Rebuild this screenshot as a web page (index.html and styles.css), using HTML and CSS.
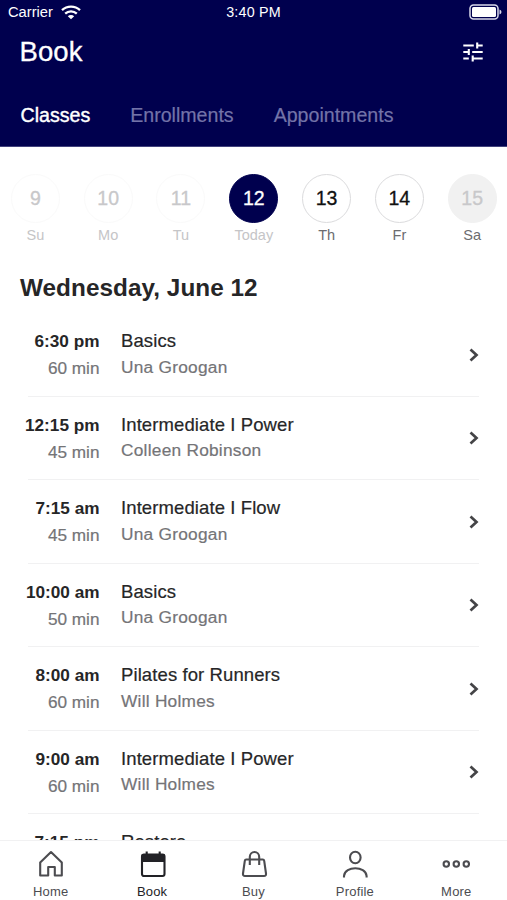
FILE: index.html
```html
<!DOCTYPE html>
<html lang="en">
<head>
<meta charset="utf-8">
<title>Book</title>
<link rel="stylesheet" href="styles.css">
</head>
<body>
<div class="app">
  <header class="header">
    <div class="status">
      <div class="carrier"><span>Carrier</span>
        <svg width="20" height="15" viewBox="0 0 20 15" fill="none" stroke="#fff" stroke-width="2.3"><path d="M1 5.2a13 13 0 0 1 18 0M4.2 8.6a8.4 8.4 0 0 1 11.6 0"/><path d="M10 14.2 6.8 11.2a4.6 4.6 0 0 1 6.4 0z" fill="#fff" stroke="none"/></svg>
      </div>
      <span class="clock">3:40 PM</span>
      <svg class="battery" width="33" height="16" viewBox="0 0 33 16"><rect x="1" y="1" width="28" height="14" rx="3.5" fill="none" stroke="#d9d9ea" stroke-width="1.5"/><rect x="3" y="3" width="24" height="10" rx="1.5" fill="#fff"/><path d="M30.5 5.5q2 .6 2 2.5t-2 2.500z" fill="#d9d9ea"/></svg>
    </div>
    <div class="title-row">
      <h1>Book</h1>
      <svg width="20" height="20" viewBox="0 0 20 20" fill="none" stroke="#fff" stroke-width="2.1"><path d="M.3 3.500h10.500M14.200 .5v6M14.200 3.500h5.500M.3 10h5.500M5.800 7v6M9.200 10h10.500M.3 16.500h5.500M9.700 13.500v6M9.700 16.500h10"/></svg>
    </div>
    <nav class="tabs"><span class="active">Classes</span><span>Enrollments</span><span>Appointments</span></nav>
  </header>
  <section class="week">
    <div class="day past"><b>9</b><span>Su</span></div>
    <div class="day past"><b>10</b><span>Mo</span></div>
    <div class="day past"><b>11</b><span>Tu</span></div>
    <div class="day today"><b>12</b><span>Today</span></div>
    <div class="day"><b>13</b><span>Th</span></div>
    <div class="day"><b>14</b><span>Fr</span></div>
    <div class="day closed"><b>15</b><span>Sa</span></div>
  </section>
  <h2>Wednesday, June 12</h2>
  <main class="list">
    <article class="row"><div class="when"><b>6:30 pm</b><span>60 min</span></div><div class="what"><h3>Basics</h3><p>Una Groogan</p></div><svg class="chev" viewBox="0 0 10 14"><path d="M1.500 1.500 7.500 7l-6 5.500"/></svg></article>
    <article class="row"><div class="when"><b>12:15 pm</b><span>45 min</span></div><div class="what"><h3>Intermediate I Power</h3><p>Colleen Robinson</p></div><svg class="chev" viewBox="0 0 10 14"><path d="M1.500 1.500 7.500 7l-6 5.500"/></svg></article>
    <article class="row"><div class="when"><b>7:15 am</b><span>45 min</span></div><div class="what"><h3>Intermediate I Flow</h3><p>Una Groogan</p></div><svg class="chev" viewBox="0 0 10 14"><path d="M1.500 1.500 7.500 7l-6 5.500"/></svg></article>
    <article class="row"><div class="when"><b>10:00 am</b><span>50 min</span></div><div class="what"><h3>Basics</h3><p>Una Groogan</p></div><svg class="chev" viewBox="0 0 10 14"><path d="M1.500 1.500 7.500 7l-6 5.500"/></svg></article>
    <article class="row"><div class="when"><b>8:00 am</b><span>60 min</span></div><div class="what"><h3>Pilates for Runners</h3><p>Will Holmes</p></div><svg class="chev" viewBox="0 0 10 14"><path d="M1.500 1.500 7.500 7l-6 5.500"/></svg></article>
    <article class="row"><div class="when"><b>9:00 am</b><span>60 min</span></div><div class="what"><h3>Intermediate I Power</h3><p>Will Holmes</p></div><svg class="chev" viewBox="0 0 10 14"><path d="M1.500 1.500 7.500 7l-6 5.500"/></svg></article>
    <article class="row"><div class="when"><b>7:15 pm</b></div><div class="what"><h3>Restore</h3></div></article>
  </main>
  <footer class="bar">
    <div class="item"><svg viewBox="0 0 28 28"><path d="M3.200 12.500 14 2l10.800 10.500V25.500H17.800V17h-6.600v8.500H3.200z"/></svg><span>Home</span></div>
    <div class="item on"><svg viewBox="0 0 28 28"><rect x="4" y="4.500" width="22.500" height="21.500" rx="2"/><path class="solid" d="M3.500 4.500h23.500v7.500H3.500z"/><path d="M8.700 1.500v5M21.700 1.500v5"/></svg><span>Book</span></div>
    <div class="item"><svg viewBox="0 0 28 28"><path d="M6.200 9.500h16.600q1.200 0 1.400 1.400l1.800 12.600q.2 2.500-2 2.500H5q-2.200 0-2-2.500l1.800-12.600q.2-1.400 1.400-1.400zM9.800 15V7a4.700 5 0 0 1 9.400 0v8"/></svg><span>Buy</span></div>
    <div class="item"><svg viewBox="0 0 28 28"><ellipse cx="14.300" cy="7.500" rx="5.300" ry="5.800"/><path d="M3 27.500v-1.500c1-10.300 21.600-10.300 22.600 0v1.500"/></svg><span>Profile</span></div>
    <div class="item"><svg viewBox="0 0 28 28"><circle cx="4.300" cy="14" r="2.700"/><circle cx="14.300" cy="14" r="2.700"/><circle cx="24.300" cy="14" r="2.700"/></svg><span>More</span></div>
  </footer>
</div>
</body>
</html>
```
FILE: styles.css
```css
* { box-sizing: border-box; margin: 0; padding: 0; }
body { font-family: "Liberation Sans", Arial, sans-serif; background: #fff; color: #262627; }
.app { width: 507px; height: 900px; display: flex; flex-direction: column; overflow: hidden; }
.header { height: 147px; flex: none; background: #00004e; color: #fff; border-bottom: 1px solid #42427c; }
.status { height: 24px; display: grid; grid-template-columns: 1fr auto 1fr; align-items: center; padding: 0 5px 0 8px; font-size: 14.700px; }
.carrier { display: flex; align-items: center; gap: 8px; }
.clock { font-size: 14.300px; letter-spacing: .2px; margin-right: 3px; }
.battery { justify-self: end; }
.title-row { height: 56px; display: flex; justify-content: space-between; align-items: center; padding: 0 24px 0 19.500px; }
h1 { font-size: 27.500px; font-weight: 400; line-height: 32px; letter-spacing: .1px; -webkit-text-stroke: .3px; }
.tabs { display: flex; gap: 40px; padding: 23px 0 0 20.500px; font-size: 19.600px; line-height: 24px; color: #7373a8; }
.tabs span { -webkit-text-stroke: .2px; }
.tabs .active { color: #fff; -webkit-text-stroke: .4px #fff; }
.week { display: flex; flex: none; margin: 27px -1px 0; }
.day { width: 72.800px; flex: none; display: flex; flex-direction: column; align-items: center; color: #6c6c6f; }
.day b { width: 49px; height: 49px; border: 1px solid #dbdbdd; border-radius: 50%; display: grid; place-items: center; font-size: 19.500px; font-weight: 400; color: #111; -webkit-text-stroke: .3px; }
.day span { margin-top: 3px; font-size: 14.500px; line-height: 18px; }
.past b { border-color: #fafafa; color: #c8c8ca; }
.past span, .today span { color: #c5c5c7; }
.today b { background: #00004e; border-color: #00004e; color: #fff; }
.closed b { background: #f1f1f1; border-color: #f1f1f1; color: #c8c8ca; }
h2 { flex: none; margin: 30px 0 0 20px; font-size: 24.300px; line-height: 28px; letter-spacing: .05px; }
.list { flex: 1; min-height: 0; overflow: hidden; margin: 11px 28px 0 24px; }
.row { height: 83.500px; display: flex; position: relative; padding-top: 17px; }
.row::after { content: ""; position: absolute; left: 4px; right: 0; bottom: 0; height: 1px; background: #f1f1f2; }
.when { width: 75.500px; flex: none; display: flex; flex-direction: column; align-items: flex-end; font-size: 17.200px; line-height: 22px; white-space: nowrap; }
.when span { margin-top: 5px; color: #747477; -webkit-text-stroke: .2px; }
.what { flex: 1; margin-left: 21.500px; }
h3 { font-size: 18.500px; font-weight: 400; line-height: 22px; letter-spacing: .1px; -webkit-text-stroke: .2px; }
.what p { margin-top: 3.500px; font-size: 17.300px; line-height: 22px; letter-spacing: .25px; color: #747477; -webkit-text-stroke: .2px; }
.chev { width: 10px; height: 14px; margin-top: 17.500px; fill: none; stroke: #444447; stroke-width: 2.700; }
.bar { height: 60px; flex: none; display: flex; border-top: 1px solid #f1f1f2; background: #fff; }
.item { flex: 1; display: flex; flex-direction: column; align-items: center; padding-top: 9px; font-size: 13px; color: #4c4c50; }
.item svg { width: 28px; height: 28px; fill: none; stroke: #4c4c50; stroke-width: 2.100; stroke-linejoin: round; }
.item span { margin-top: 6px; line-height: 16px; letter-spacing: .2px; }
.on { color: #222226; }
.on svg { stroke: #222226; }
.on .solid { fill: #222226; stroke: none; }
```
